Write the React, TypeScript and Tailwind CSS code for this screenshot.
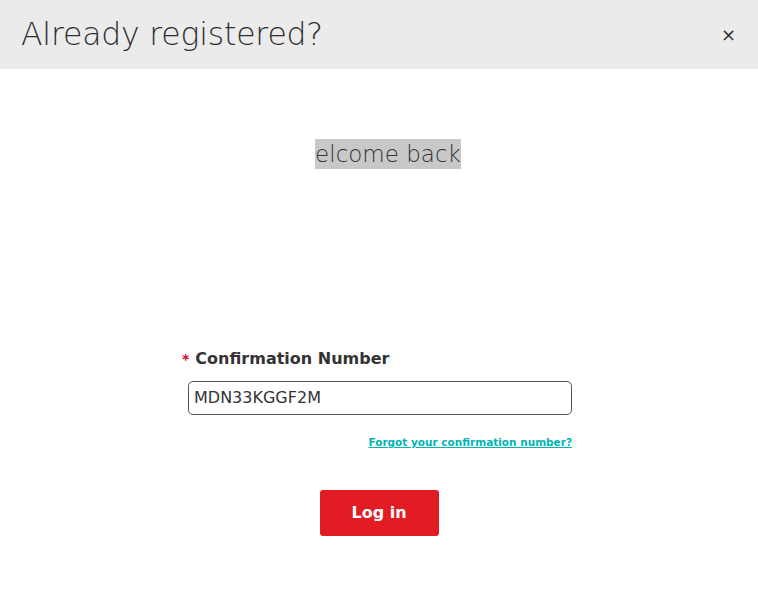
const font = { fontFamily: '"DejaVu Sans", "Open Sans", sans-serif' }

export default function App() {
  return (
    <div className="min-h-[592px] w-full bg-white text-[#333]" style={font}>
      <header className="flex h-[69px] items-center justify-between bg-[#ebebeb] pl-[21px] pr-[22px]">
        <h1 className="text-[31.5px] font-light leading-none tracking-[-0.2px] text-[#2e2e2e]">Already registered?</h1>
        <button type="button" className="text-[18px] leading-none text-[#333]">×</button>
      </header>

      <div className="flex flex-col items-center">
        <p className="mt-[70px] ml-[18px] bg-[#c8c8c8] text-[23px] leading-[30px] font-light text-[#333]">elcome back</p>

        <div className="mt-[180px] flex w-[390px] flex-col pl-[4px]">
          <label className="flex items-baseline text-[16px] font-bold leading-[20px] text-[#333]">
            <span className="-ml-[6px] mr-[6px] text-[14px] text-[#d0021b]">*</span>
            Confirmation Number
          </label>
          <div className="mt-[12px] flex h-[34px] w-[384px] items-center rounded-[5px] border border-[#555] px-[5px] text-[16px] text-[#333]">
            MDN33KGGF2M
          </div>
          <a href="#" className="mt-[20px] w-[384px] text-right text-[10.5px] font-bold text-[#00b4b8] underline">
            Forgot your confirmation number?
          </a>
        </div>

        <button type="button" className="mt-[39px] h-[46px] w-[119px] rounded-[3px] bg-[#e31b23] text-[16px] font-bold text-white">
          Log in
        </button>
      </div>
    </div>
  )
}
